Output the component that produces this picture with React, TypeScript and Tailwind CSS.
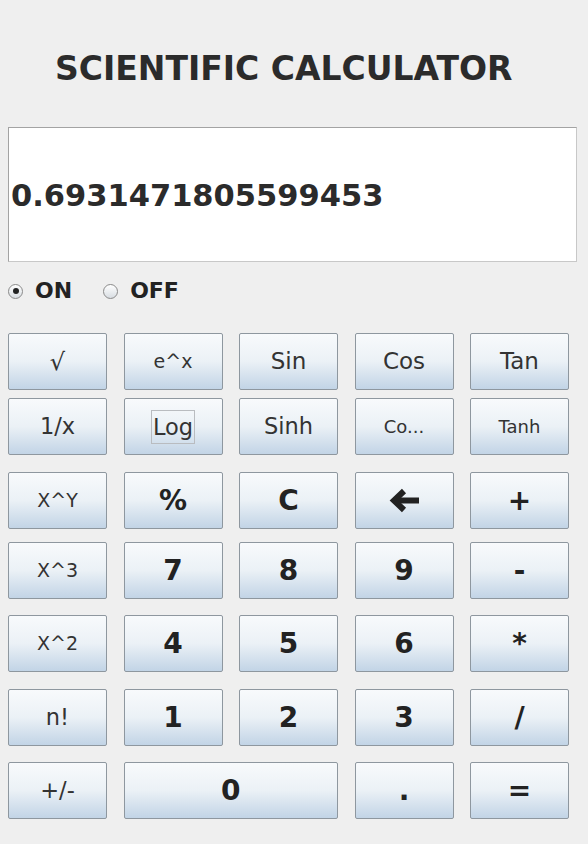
import React from "react";

type KeyDef = {
  label: React.ReactNode;
  cls?: string;
  span?: boolean;
};

const font = "font-['DejaVu_Sans',sans-serif]";

function BackArrow() {
  return (
    <svg width="30" height="25" viewBox="0 0 30 25" className="block">
      <polyline points="15,3 5,12.5 15,22" fill="none" stroke="#222" strokeWidth="6" strokeLinejoin="miter" />
      <line x1="7" y1="12.5" x2="30" y2="12.5" stroke="#222" strokeWidth="6" />
    </svg>
  );
}

const reg = "text-[23px] font-normal text-[#333]";
const small = "text-[19px] font-normal text-[#333]";
const bold = "text-[28px] font-bold text-[#222]";

const rows: { mt: string; keys: KeyDef[] }[] = [
  {
    mt: "mt-[32px]",
    keys: [
      { label: "√", cls: "text-[24px] text-[#333]" },
      { label: "e^x", cls: small },
      { label: "Sin", cls: reg },
      { label: "Cos", cls: reg },
      { label: "Tan", cls: reg },
    ],
  },
  {
    mt: "mt-[8px]",
    keys: [
      { label: "1/x", cls: "text-[22.5px] text-[#333]" },
      {
        label: (
          <span className="border border-[#b9bcc0] px-[1px] leading-[32px]">Log</span>
        ),
        cls: "text-[22.5px] text-[#333]",
      },
      { label: "Sinh", cls: "text-[22.5px] text-[#333]" },
      { label: "Co...", cls: "text-[18px] text-[#333]" },
      { label: "Tanh", cls: "text-[18px] text-[#333]" },
    ],
  },
  {
    mt: "mt-[17px]",
    keys: [
      { label: "X^Y", cls: small },
      { label: "%", cls: bold },
      { label: "C", cls: bold },
      { label: <BackArrow />, cls: bold },
      { label: "+", cls: bold },
    ],
  },
  {
    mt: "mt-[13px]",
    keys: [
      { label: "X^3", cls: small },
      { label: "7", cls: bold },
      { label: "8", cls: bold },
      { label: "9", cls: bold },
      { label: "-", cls: bold },
    ],
  },
  {
    mt: "mt-[16px]",
    keys: [
      { label: "X^2", cls: small },
      { label: "4", cls: bold },
      { label: "5", cls: bold },
      { label: "6", cls: bold },
      { label: "*", cls: bold },
    ],
  },
  {
    mt: "mt-[17px]",
    keys: [
      { label: "n!", cls: "text-[22.5px] text-[#333]" },
      { label: "1", cls: bold },
      { label: "2", cls: bold },
      { label: "3", cls: bold },
      { label: "/", cls: bold },
    ],
  },
  {
    mt: "mt-[16px]",
    keys: [
      { label: "+/-", cls: "text-[22.5px] text-[#333]" },
      { label: "0", cls: bold, span: true },
      { label: ".", cls: bold },
      { label: "=", cls: bold },
    ],
  },
];

function Key({ k }: { k: KeyDef }) {
  return (
    <button
      className={`h-[57px] flex items-center justify-center rounded-[2px] border border-[#8e979f] bg-gradient-to-b from-[#f8fafc] via-[#ebf1f6] to-[#c2d4e6] leading-none ${
        k.span ? "col-span-2" : ""
      } ${k.cls ?? ""}`}
    >
      {k.label}
    </button>
  );
}

function Radio({ checked }: { checked?: boolean }) {
  return (
    <span className="w-[15px] h-[15px] rounded-full border border-[#8a8a8a] bg-gradient-to-b from-[#ffffff] to-[#d8dde2] flex items-center justify-center">
      {checked && <span className="w-[6px] h-[6px] rounded-full bg-[#222]" />}
    </span>
  );
}

export default function App() {
  return (
    <div className={`w-[588px] h-[844px] bg-[#efefef] overflow-hidden ${font}`}>
      <h1 className="pt-[52px] pl-[55px] text-[33px] leading-[33px] font-bold text-[#2b2b2b] whitespace-nowrap">
        SCIENTIFIC CALCULATOR
      </h1>

      <div className="mt-[42px] ml-[8px] w-[569px] h-[135px] bg-white border border-[#a3a3a3] border-b-[#c8c8c8] border-r-[#c8c8c8] flex items-center pl-[2px] pt-[4px]">
        <span className="text-[30.5px] font-bold text-[#2b2b2b] leading-none">0.6931471805599453</span>
      </div>

      <div className="mt-[19px] ml-[8px] h-[20px] flex items-center text-[22px] font-bold text-[#222] leading-none">
        <Radio checked />
        <span className="ml-[12px]">ON</span>
        <span className="ml-[31px]">
          <Radio />
        </span>
        <span className="ml-[12px]">OFF</span>
      </div>

      <div className="pl-[8px]">
        {rows.map((row, i) => (
          <div key={i} className={`grid grid-cols-[repeat(5,99px)] gap-x-[16.5px] ${row.mt}`}>
            {row.keys.map((k, j) => (
              <Key key={j} k={k} />
            ))}
          </div>
        ))}
      </div>
    </div>
  );
}
